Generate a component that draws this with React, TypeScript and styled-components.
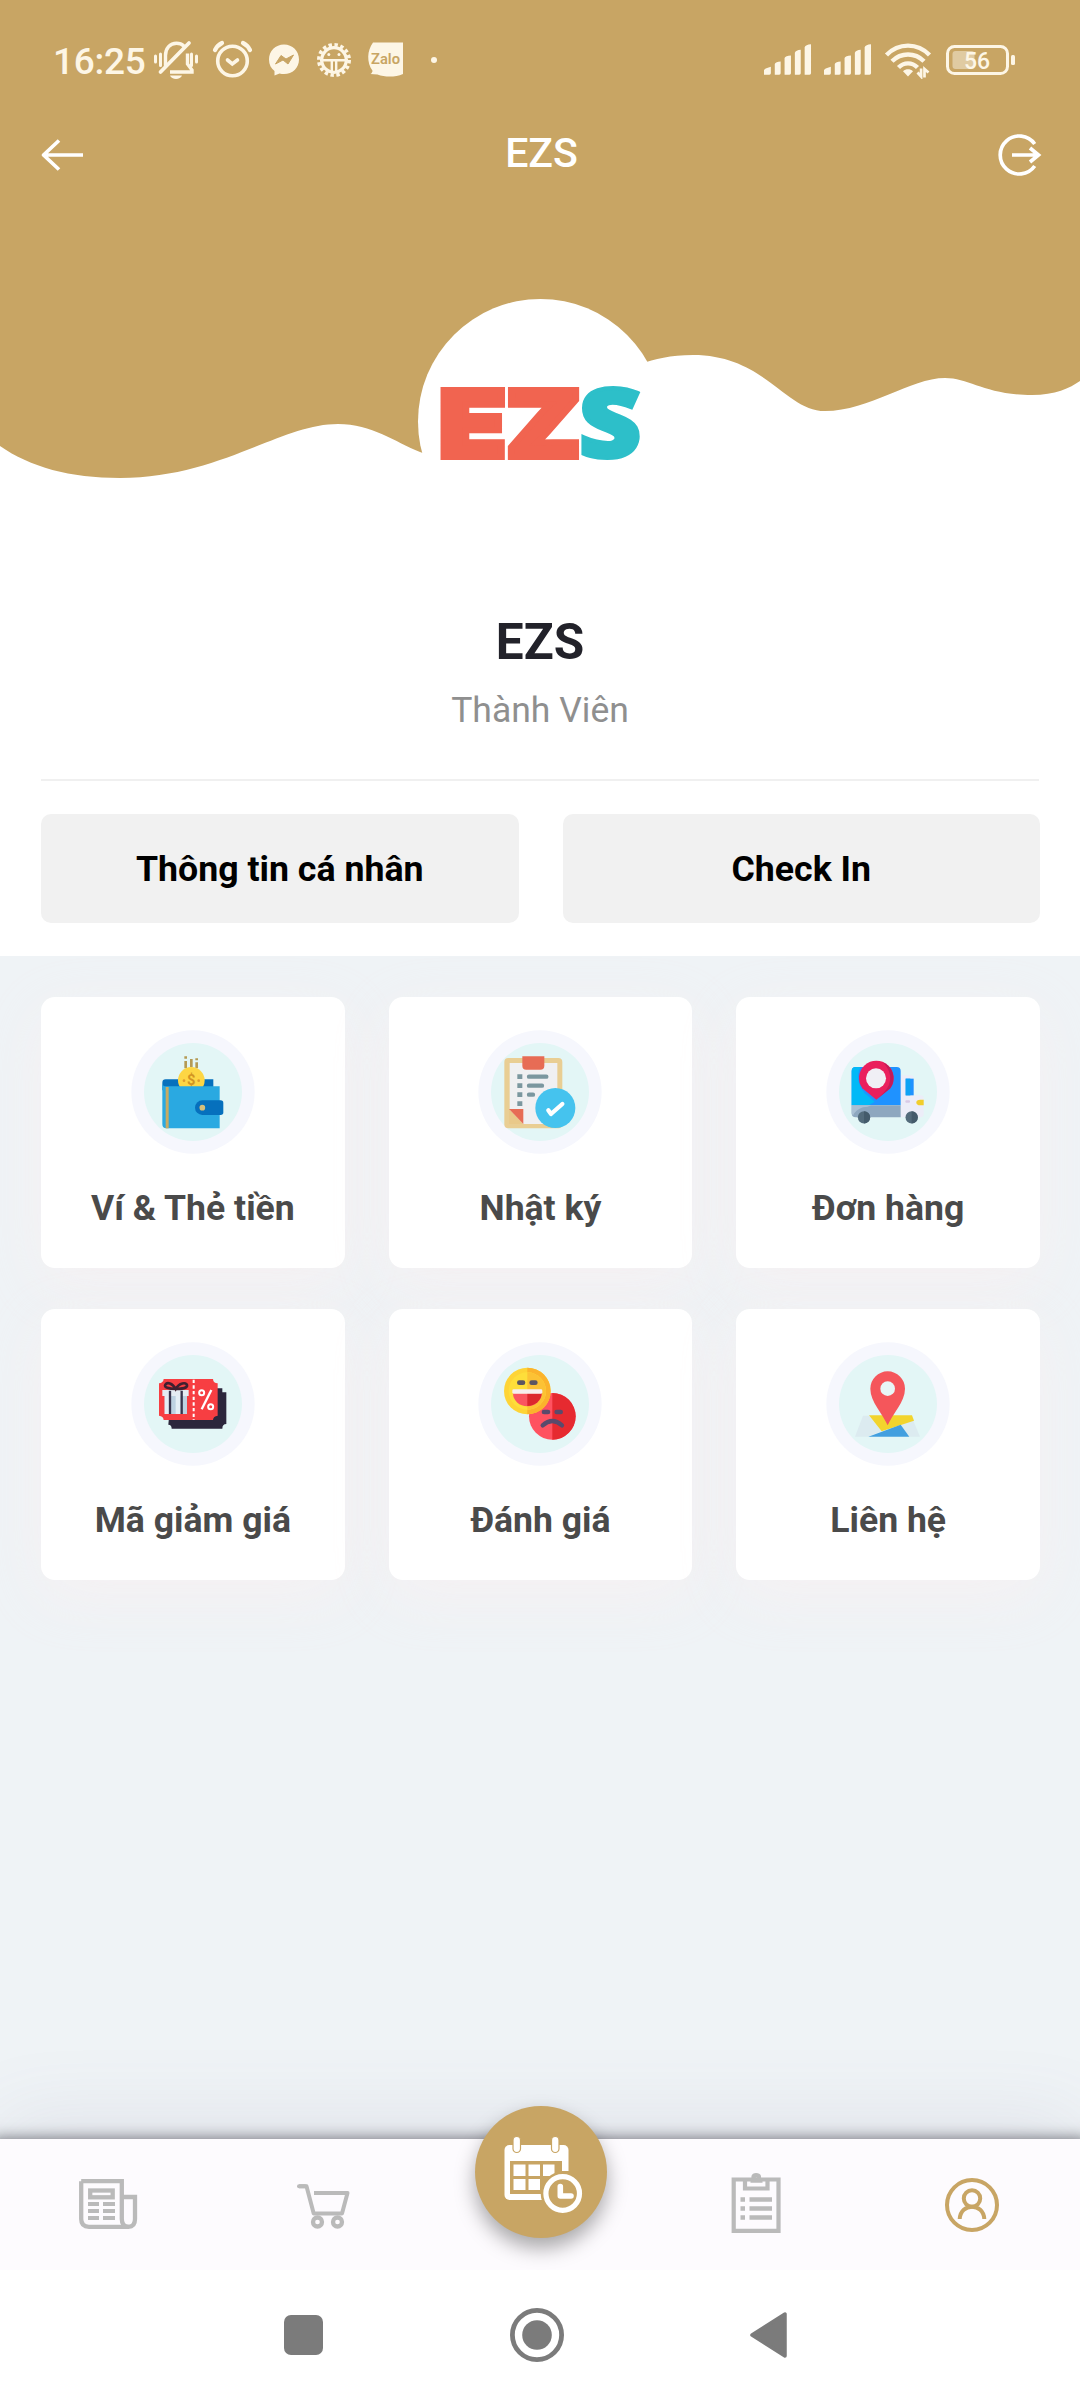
import React from "react";
import styled, { createGlobalStyle } from "styled-components";

const GOLD = "#c8a564";
const CREAM = "#fdf6e6";
const GREY = "#bababa";

const GlobalStyle = createGlobalStyle`
  * { box-sizing: border-box; }
  body { margin: 0; background: #fff; }
  button { font: inherit; border: 0; padding: 0; background: none; }
`;

const Screen = styled.div`
  width: 1080px;
  height: 2400px;
  display: flex;
  flex-direction: column;
  overflow: hidden;
  background: #eff3f6;
  font-family: Roboto, "Noto Sans", sans-serif;
`;

const Profile = styled.section`
  height: 956px;
  flex: none;
  display: grid;
  background: #fff;
  & > * { grid-area: 1 / 1; }
`;

const Wave = styled.svg`
  display: block;
  width: 1080px;
  height: 480px;
`;

const ProfileContent = styled.div`
  display: flex;
  flex-direction: column;
  z-index: 1;
`;

const StatusBar = styled.div`
  height: 120px;
  padding: 0 64px 0 53px;
  display: flex;
  align-items: center;
  justify-content: space-between;
  svg { display: block; }
`;

const StatusIcons = styled.div`
  display: flex;
  align-items: center;
  gap: 12px;
`;

const Clock = styled.span`
  width: 88px;
  font-size: 37px;
  line-height: 40px;
  padding-top: 4px;
  font-weight: 500;
  letter-spacing: -0.3px;
  white-space: nowrap;
  color: ${CREAM};
`;

const Header = styled.header`
  height: 69px;
  padding: 0 38px 0 40px;
  display: flex;
  align-items: center;
  justify-content: space-between;
`;

const HeaderTitle = styled.h1`
  margin: 0;
  font-size: 41px;
  line-height: 69px;
  height: 71px;
  font-weight: 500;
  color: #fff;
`;

const Avatar = styled.div`
  width: 245px;
  height: 245px;
  margin: 110px auto 0;
  border-radius: 50%;
  background: #fff;
  svg { display: block; }
`;

const Name = styled.h2`
  margin: 68px 0 0;
  text-align: center;
  font-size: 49.500px;
  line-height: 60px;
  font-weight: 700;
  color: #22222a;
`;

const Rank = styled.p`
  margin: 17px 0 0;
  text-align: center;
  font-size: 35.500px;
  line-height: 42px;
  color: #8f8f8f;
`;

const Divider = styled.hr`
  width: 998px;
  height: 2px;
  margin: 48px auto 0;
  border: 0;
  background: #f0f0f0;
`;

const Actions = styled.div`
  display: grid;
  grid-template-columns: 1fr 1fr;
  gap: 44px;
  padding: 33px 40px 0 41px;
`;

const ActionButton = styled.button`
  height: 109px;
  border-radius: 10px;
  background: #f1f1f1;
  color: #000;
  font-size: 35.700px;
  font-weight: 700;
  line-height: 42px;
`;

const Main = styled.main`
  flex: 1;
  padding: 41px 40px 0 41px;
`;

const Grid = styled.div`
  display: grid;
  grid-template-columns: repeat(3, 1fr);
  gap: 41px 44px;
`;

const Card = styled.div`
  height: 271px;
  padding-top: 33px;
  display: flex;
  flex-direction: column;
  align-items: center;
  border-radius: 14px;
  background: #fff;
  box-shadow: 0 16px 60px rgba(255, 240, 240, 0.45);
  svg { display: block; }
`;

const CardLabel = styled.span`
  margin-top: 33px;
  font-size: 35.600px;
  line-height: 42px;
  font-weight: 700;
  color: #4a4a4a;
`;

const TabBar = styled.nav`
  height: 131px;
  flex: none;
  display: grid;
  grid-template-columns: repeat(5, 1fr);
  justify-items: center;
  background: #fdfbfe;
  box-shadow: 0 7px 14px 8px rgba(40, 40, 50, 0.6), 0 -20px 80px rgba(110, 95, 140, 0.1);
`;

const Tab = styled.button<{ $top: number }>`
  display: flex;
  align-items: flex-start;
  padding-top: ${(p) => p.$top}px;
  height: 131px;
  svg { display: block; }
`;

const Fab = styled.button`
  width: 132px;
  height: 132px;
  margin: -33px 0 0 2px;
  border-radius: 50%;
  background: ${GOLD};
  box-shadow: 0 10px 20px rgba(0, 0, 0, 0.34);
  svg { display: block; }
`;

const SystemNav = styled.div`
  height: 130px;
  flex: none;
  padding: 0 293px 0 284px;
  display: flex;
  align-items: center;
  justify-content: space-between;
  background: #fff;
  z-index: 1;
  svg { display: block; }
`;

const MoreDot = styled.i`
  width: 6px;
  height: 6px;
  margin-left: 14px;
  border-radius: 50%;
  background: ${CREAM};
`;

const MuteIcon = () => (
  <svg width="46" height="40" viewBox="153 40.500 46 40" fill="none" stroke={CREAM} strokeWidth="3.400" strokeLinecap="round">
    <path d="M155.500 56.500v6M160.500 54.500v11.500M191.500 54.500v11.500M196.500 56.500v6" strokeWidth="3" />
    <path d="M165.500 66V56c0-7 4.500-12.300 11-12.300 3 0 5.500 1 7.300 2.800" />
    <path d="M160.500 72.500L189 43.500" strokeWidth="3.800" />
    <path d="M187.500 54v10.500l4.500 6v2h-22" strokeLinecap="butt" />
    <path d="M170 76h12c-1.500 4.500-10.500 4.500-12 0z" fill={CREAM} stroke="none" />
  </svg>
);

const AlarmIcon = () => (
  <svg width="43" height="40" viewBox="211 40.500 43 40" fill="none" stroke={CREAM} strokeWidth="3.600" strokeLinecap="round">
    <circle cx="232.500" cy="61.500" r="14.800" />
    <path d="M215 50.500c1.500-3 4-5.500 7-7M243 43.500c3 1.500 5.500 4 7 7" strokeWidth="4.200" />
    <path d="M227.500 60.500l4.800 4 5.200-4" />
  </svg>
);

const MessengerIcon = () => (
  <svg width="36" height="34" viewBox="266 43.500 36 34">
    <path d="M284 45c8.500 0 15 6.500 15 15s-6.500 14.500-15 14.500c-1.500 0-3-.2-4.500-.6l-5 2.100v-4.500C271 69 269 65 269 60c0-8.500 6.500-15 15-15z" fill={CREAM} />
    <path d="M275.500 64.500l5.500-8.500 5 3.500 7.500-4-5.500 9-5-4z" fill={GOLD} stroke={GOLD} strokeWidth="1" strokeLinejoin="round" />
  </svg>
);

const GearFaceIcon = () => (
  <svg width="40" height="36" viewBox="314 42 40 36" fill="none" stroke={CREAM}>
    <circle cx="334" cy="60" r="15.200" strokeWidth="3.600" strokeDasharray="3.400 2.570" />
    <circle cx="334" cy="60" r="12.300" strokeWidth="3.200" />
    <path d="M320 60.300h28M331.800 60v13M336.200 60v13" strokeWidth="2.400" />
    <circle cx="328.800" cy="54.500" r="1.500" fill={CREAM} stroke="none" />
    <circle cx="339" cy="54.500" r="1.500" fill={CREAM} stroke="none" />
  </svg>
);

const ZaloIcon = () => (
  <svg width="39" height="36" viewBox="366 41.500 39 36">
    <path d="M373 42h30v31.500c-8 3.500-18 3.300-25.500.5-2.500 0-5-.2-7-.5 1.200-.8 2-2 2-3.300C366.500 62 367 50 373 42z" fill={CREAM} />
    <text x="371" y="63.300" fontSize="14.500" fontWeight="600" textLength="29" lengthAdjust="spacingAndGlyphs" fill={GOLD}>Zalo</text>
  </svg>
);

const SignalIcon = () => (
  <svg width="48" height="32" viewBox="0 0 49 32" fill={CREAM}>
    <path d="M0 31v-4.500q0-1.500 7-3.500v6.500q0 1.500-1.500 1.500zM11 31V20q1-2 6-2.500V29.500q0 1.500-1.500 1.500zM21 31V14q1-2 6.500-2.500V29.500q0 1.500-1.500 1.500zM31.500 31V8.500q1-2.500 6-3V29.500q0 1.500-1.500 1.500zM41.500 31V3q1-2.500 6.500-3V29.500q0 1.500-1.500 1.500z" />
  </svg>
);

const WifiIcon = () => (
  <svg width="49" height="38" viewBox="884 41.500 49 38" fill="none" stroke={CREAM} strokeWidth="4.400">
    <path d="M886.500 55.500c12-12.500 31-12.500 43 0M892 61.800c9-9 23-9 32 0M898.500 68c5.500-5.500 13.500-5.500 19 0" />
    <path d="M903 71.800c3-2.600 7-2.600 10 0l-5 5.200z" fill={CREAM} stroke="none" />
    <path d="M917.500 73l3.600 4v-8M928.500 73l-4-3.500v8.500" strokeWidth="2.700" />
  </svg>
);

const BatteryIcon = () => (
  <svg width="71" height="32" viewBox="945 44 71 32">
    <rect x="952.500" y="51" width="22" height="18" rx="3" fill="#e0cba2" />
    <rect x="947.500" y="46.500" width="60" height="27" rx="7" fill="none" stroke={CREAM} strokeWidth="3" />
    <rect x="1011" y="55" width="4" height="10" rx="1.500" fill={CREAM} />
    <text x="977" y="69" textAnchor="middle" fontSize="23" fontWeight="500" fill={CREAM}>56</text>
  </svg>
);

const BackIcon = () => (
  <svg width="45" height="36" viewBox="40 136.500 45 36" fill="none" stroke="#fff" strokeWidth="3.700" strokeLinejoin="round">
    <path d="M59 140L43.500 154.500L59 169M43.500 154.500H83" />
  </svg>
);

const LogoutIcon = () => (
  <svg width="44" height="44" viewBox="998 132.500 44 44" fill="none" stroke="#fff" strokeWidth="3.700">
    <path d="M1034.700 143.500A19 19 0 1 0 1034.700 165.500" />
    <path d="M1012 154.500h25M1030 147.500l8.500 7-8.500 7" />
  </svg>
);

const LogoMark = () => (
  <svg width="245" height="245" viewBox="417.500 299 245 245" fontWeight="900">
    <g fill="#f16450" stroke="#f16450" strokeWidth="6" fontFamily="Inter, sans-serif" fontSize="92">
      <text x="438.500" y="456.500" textLength="67" lengthAdjust="spacingAndGlyphs">E</text>
      <text x="505.500" y="456.500" textLength="75" lengthAdjust="spacingAndGlyphs">Z</text>
    </g>
    <text x="578.500" y="457" fontFamily="Open Sans, sans-serif" fontWeight="800" fontSize="95" textLength="62" lengthAdjust="spacingAndGlyphs" fill="#2dbfc9" stroke="#2dbfc9" strokeWidth="4">S</text>
  </svg>
);

const Halo = ({ x, y, children }: { x: number; y: number; children: React.ReactNode }) => (
  <svg width="124" height="124" viewBox={`${x - 186} ${y - 186} 372 372`}>
    <circle cx={x} cy={y} r="185" fill="#f6f7fd" />
    <circle cx={x} cy={y} r="147" fill="#e3f6f6" />
    {children}
  </svg>
);

const WalletIcon = () => (
  <Halo x={280} y={245}>
    <path d="M198 207H341V240H188V217Q188 207 198 207z" fill="#0670bd" />
    <path d="M258 138v7M258 152v22M275 146v24M291 144v6M291 156v18" stroke="#b49a55" strokeWidth="8" />
    <circle cx="275" cy="210" r="40" fill="#fdd644" />
    <text x="275" y="225" textAnchor="middle" fontSize="44" fontWeight="700" fill="#d39422">$</text>
    <circle cx="253" cy="211" r="4" fill="#e09b2d" />
    <circle cx="297" cy="211" r="4" fill="#e09b2d" />
    <path d="M188 220Q190 228 198 228H360V354H200Q188 354 188 342z" fill="#2aa9e1" />
    <path d="M198 230H207V354H198z" fill="#c8ab62" />
    <path d="M308 270H363Q371 270 371 278V306Q371 314 363 314H308A22 22 0 0 1 308 270z" fill="#0670bd" />
    <circle cx="308" cy="292" r="8.500" fill="#d5bf7c" />
  </Halo>
);

const DiaryIcon = () => (
  <Halo x={1322} y={245}>
    <rect x="1215" y="143" width="174" height="211" rx="12" fill="#e9ce93" />
    <rect x="1231" y="158" width="143" height="183" fill="#f0f0f2" />
    <path d="M1269 138H1335V166Q1335 178 1323 178H1281Q1269 178 1269 166z" fill="#e76c55" />
    <path d="M1254 199h15M1254 226h15M1254 253h15M1254 280h15" stroke="#7b979f" strokeWidth="14" />
    <path d="M1289 199h52M1289 226h39M1289 253h12" stroke="#7b979f" strokeWidth="13" strokeLinecap="round" />
    <path d="M1229 296L1272 341H1229z" fill="#e9c98a" />
    <path d="M1229 296H1272V341z" fill="#e76c55" />
    <circle cx="1368" cy="293" r="60" fill="#45c3ee" />
    <path d="M1347 300L1355 311L1389 281" fill="none" stroke="#fff" strokeWidth="13" strokeLinecap="round" strokeLinejoin="round" />
  </Halo>
);

const TruckIcon = () => (
  <Halo x={865} y={245}>
    <path d="M903 195H934Q942 195 942 205V255H962Q972 255 972 265V311Q972 321 962 321H903z" fill="#ecedf8" />
    <path d="M756 182Q756 170 768 170H891Q903 170 903 182V285H756z" fill="#1f92ff" />
    <path d="M756 182Q756 170 768 170H782Q764 210 795 248L825 274Q810 285 800 285H756z" fill="#02b9f7" />
    <path d="M756 285H903V321H768Q756 321 756 309z" fill="#8ea7bf" />
    <path d="M756 285H815Q805 291 790 291Q768 298 760 316L756 309z" fill="#a9bfd3" />
    <path d="M918 205H942V255H918z" fill="#1f92ff" />
    <path d="M918 205H932V255H918z" fill="#0ea3f4" />
    <path d="M972 268H962A12 8.500 0 0 0 962 285H972z" fill="#f1ce2b" />
    <rect x="917" y="270" width="14" height="7" rx="3" fill="#d8c9e6" />
    <path d="M830 268L788 234A52 52 0 1 1 872 234z" fill="#ea1f5d" />
    <path d="M850 156A52 52 0 0 1 872 234L836 263Q900 210 850 156z" fill="#c41a58" />
    <circle cx="829" cy="204" r="30" fill="#f0eff5" />
    <circle cx="793" cy="321" r="18.500" fill="#536b7b" />
    <circle cx="936" cy="321" r="18.500" fill="#536b7b" />
    <path d="M793 302.500A18.500 18.500 0 0 1 793 339.500zM936 302.500A18.500 18.500 0 0 1 936 339.500z" fill="#445b6b" />
  </Halo>
);

const CouponIcon = () => (
  <Halo x={280} y={252}>
    <path d="M216 205H368V217H380V312Q368 312 368 326H216Q216 314 206 314z" fill="#2c263c" />
    <path d="M192 177H340Q341 190 354 190V287Q341 288 340 300H192Q191 288 178 287V190Q191 189 192 177z" fill="#f73e42" />
    <path d="M282 179V300" stroke="#fff" strokeWidth="6" strokeDasharray="10 7" />
    <path d="M195 226H262V282H195z" fill="#bdd2e2" />
    <path d="M195 226H212V282H195zM228 226H243V282H228z" fill="#e4eff6" />
    <rect x="188" y="210" width="79" height="18" fill="#e4ecf3" />
    <path d="M211 212V282M246 212V282" stroke="#37344d" strokeWidth="7" />
    <path d="M228 207C218 188 202 186 197 194S208 207 228 207C248 207 264 204 262 195S238 188 228 207z" fill="none" stroke="#40202f" strokeWidth="8" />
    <path d="M335 210L306 268" stroke="#fff" strokeWidth="7" />
    <circle cx="306" cy="218" r="7.500" fill="none" stroke="#fff" strokeWidth="6" />
    <circle cx="333" cy="260" r="7.500" fill="none" stroke="#fff" strokeWidth="6" />
  </Halo>
);

const ReviewIcon = () => (
  <Halo x={1322} y={252}>
    <circle cx="1359" cy="289" r="70" fill="#ff5260" />
    <path d="M1359 219A70 70 0 0 1 1359 359z" fill="#e62a30" />
    <path d="M1334 276h12M1372 276h12" stroke="#5a4a6c" strokeWidth="14" strokeLinecap="round" />
    <path d="M1330 316Q1359 290 1388 316" fill="none" stroke="#5a4a6c" strokeWidth="13" strokeLinecap="round" />
    <circle cx="1284" cy="213" r="70" fill="#fed436" />
    <path d="M1284 143A70 70 0 0 1 1284 283z" fill="#fbb32c" />
    <circle cx="1284" cy="213" r="56" fill="#fede3a" />
    <path d="M1284 157A56 56 0 0 1 1284 269z" fill="#fcc235" />
    <path d="M1260 188h11M1297 188h11" stroke="#5c5662" strokeWidth="14" strokeLinecap="round" />
    <path d="M1241 220H1327A43 39 0 0 1 1241 220z" fill="#fa5560" />
    <path d="M1284 220H1327A43 39 0 0 1 1284 258z" fill="#dc282e" />
    <rect x="1239" y="208" width="90" height="13" rx="4" fill="#f7eeee" />
  </Halo>
);

const ContactIcon = () => (
  <Halo x={865} y={252}>
    <path d="M790 287H808L846 334L806 350H766zM903 314L940 300L961 350H929z" fill="#dcebf0" />
    <path d="M808 286H937L943 302L846 334z" fill="#f2d42d" />
    <path d="M806 350L903 314L929 350z" fill="#429fdf" />
    <path d="M864 316C850 282 812 246 812 206A52 52 0 0 1 916 206C916 246 878 282 864 316z" fill="#f5565b" />
    <circle cx="864" cy="206" r="22" fill="#e8f6f6" />
  </Halo>
);

const NewsIcon = () => (
  <svg width="60" height="52" viewBox="78 2178 60 52" fill="none" stroke={GREY} strokeWidth="4.300">
    <path d="M81.200 2181.200H121.800V2219Q121.800 2226.800 128.500 2226.800Q135 2226.800 135 2219V2197H122" />
    <path d="M81.200 2181.200V2219Q81.200 2226.800 89 2226.800H129" />
    <rect x="90.200" y="2190.500" width="22.500" height="6.800" />
    <path d="M88 2204h11M103 2204h12M88 2211h11M103 2211h12M88 2218h11M103 2218h12" strokeWidth="4" />
  </svg>
);

const CartIcon = () => (
  <svg width="54" height="47" viewBox="297 2183 54 47" fill="none" stroke={GREY} strokeWidth="4">
    <path d="M299 2186.200H306.500L313.700 2213.500H342L347.500 2193H314" strokeLinejoin="round" />
    <path d="M299 2186.200H305" strokeLinecap="round" />
    <circle cx="317.500" cy="2222" r="4.500" strokeWidth="4.300" />
    <circle cx="337.500" cy="2222" r="4.500" strokeWidth="4.300" />
  </svg>
);

const CalendarClockIcon = () => (
  <svg width="132" height="132" viewBox="475 2106 132 132">
    <rect x="504.500" y="2145" width="64" height="55" rx="5" fill="#fff" />
    <path d="M510 2161H562V2171H569V2201H545V2194H510z" fill={GOLD} />
    <path d="M513.500 2164.500h12v11.500h-12zM528.500 2164.500h11.500v11.500h-11.500zM543 2164.500h11.500v11.500H543zM513.500 2179h12v11h-12zM528.500 2179h11.500v11h-11.500z" fill="#fff" />
    <rect x="513" y="2136.500" width="7.500" height="16" rx="3.700" fill="#fff" stroke={GOLD} strokeWidth="1.200" />
    <rect x="551.500" y="2136.500" width="7.500" height="16" rx="3.700" fill="#fff" stroke={GOLD} strokeWidth="1.200" />
    <circle cx="562.700" cy="2193.500" r="22" fill={GOLD} />
    <circle cx="562.700" cy="2193.500" r="16.800" fill="none" stroke="#fff" strokeWidth="5.200" />
    <path d="M560.300 2186.500V2196H571" fill="none" stroke="#fff" strokeWidth="5.600" strokeLinecap="round" strokeLinejoin="round" />
  </svg>
);

const OrdersIcon = () => (
  <svg width="50" height="62" viewBox="731.500 2172 50 62" fill="none" stroke={GREY} strokeWidth="4.200">
    <path d="M734.200 2179.500H779V2230.800H734.200z" />
    <path d="M745.500 2180V2188.500H768V2180" />
    <path d="M751 2180.500H755Q752.500 2175.300 756.600 2175.300Q761 2175.300 758.500 2180.500H763" strokeWidth="4.600" />
    <path d="M741 2199.500h4.500M750 2199.500h22.500M741 2208.500h4.500M750 2208.500h22.500M741 2217.500h4.500M750 2217.500h22.500" strokeWidth="4.600" />
  </svg>
);

const UserIcon = () => (
  <svg width="56" height="56" viewBox="945 2176.500 56 56" fill="none" stroke={GOLD} strokeWidth="4">
    <circle cx="973" cy="2204.500" r="25" />
    <circle cx="973" cy="2198" r="8.200" />
    <path d="M960.700 2218.500C961.500 2202 984.500 2202 985.300 2218.500" />
  </svg>
);

const cards = [
  { label: "Ví & Thẻ tiền", icon: <WalletIcon /> },
  { label: "Nhật ký", icon: <DiaryIcon /> },
  { label: "Đơn hàng", icon: <TruckIcon /> },
  { label: "Mã giảm giá", icon: <CouponIcon /> },
  { label: "Đánh giá", icon: <ReviewIcon /> },
  { label: "Liên hệ", icon: <ContactIcon /> },
];

export default function App() {
  return (
    <Screen>
      <GlobalStyle />
      <Profile>
        <Wave viewBox="0 0 1080 480">
          <path
            d="M0 0H1080V381C1070 388 1055 395 1032 395C985 395 970 378 945 378C910 378 870 411 825 411C785 411 765 355 693 355C670 355 655 359 640 364L470 470L420 452C395 442 372 424 338 424C280 424 220 478 120 478C70 478 30 467 0 446z"
            fill={GOLD}
          />
        </Wave>
        <ProfileContent>
          <StatusBar>
            <StatusIcons>
              <Clock>16:25</Clock>
              <MuteIcon />
              <AlarmIcon />
              <MessengerIcon />
              <GearFaceIcon />
              <ZaloIcon />
              <MoreDot />
            </StatusIcons>
            <StatusIcons>
              <SignalIcon />
              <SignalIcon />
              <WifiIcon />
              <BatteryIcon />
            </StatusIcons>
          </StatusBar>
          <Header>
            <BackIcon />
            <HeaderTitle>EZS</HeaderTitle>
            <LogoutIcon />
          </Header>
          <Avatar>
            <LogoMark />
          </Avatar>
          <Name>EZS</Name>
          <Rank>Thành Viên</Rank>
          <Divider />
          <Actions>
            <ActionButton>Thông tin cá nhân</ActionButton>
            <ActionButton>Check In</ActionButton>
          </Actions>
        </ProfileContent>
      </Profile>
      <Main>
        <Grid>
          {cards.map((c) => (
            <Card key={c.label}>
              {c.icon}
              <CardLabel>{c.label}</CardLabel>
            </Card>
          ))}
        </Grid>
      </Main>
      <TabBar>
        <Tab $top={39}><NewsIcon /></Tab>
        <Tab $top={44}><CartIcon /></Tab>
        <Fab><CalendarClockIcon /></Fab>
        <Tab $top={33}><OrdersIcon /></Tab>
        <Tab $top={37.5}><UserIcon /></Tab>
      </TabBar>
      <SystemNav>
        <svg width="39" height="40" viewBox="0 0 39 40"><rect width="39" height="40" rx="7" fill="#7b7b7b" /></svg>
        <svg width="54" height="54" viewBox="0 0 54 54">
          <circle cx="27" cy="27" r="24.600" fill="none" stroke="#7b7b7b" strokeWidth="4.800" />
          <circle cx="27" cy="27" r="14.800" fill="#7b7b7b" />
        </svg>
        <svg width="37" height="46" viewBox="0 0 37 46"><path d="M2 23L35 2V44z" fill="#7b7b7b" stroke="#7b7b7b" strokeWidth="3.500" strokeLinejoin="round" /></svg>
      </SystemNav>
    </Screen>
  );
}
